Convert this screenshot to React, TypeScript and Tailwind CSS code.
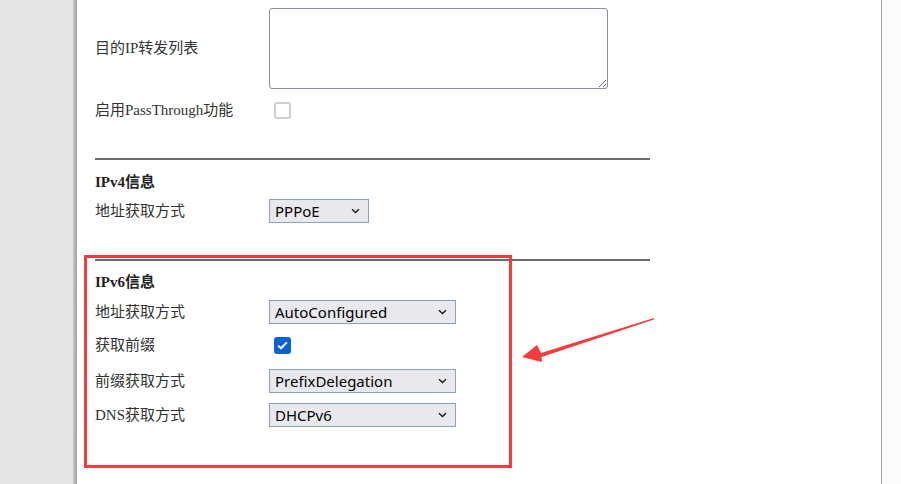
import type { FC, ReactNode } from "react";

const labelFont = { fontFamily: "'Liberation Serif', 'Noto Sans CJK SC', serif" };

const Chevron = () => (
  <svg width="9" height="6" viewBox="0 0 9 6" className="absolute right-[8px] top-1/2 -translate-y-1/2">
    <path d="M1 1.2 L4.5 4.6 L8 1.2" fill="none" stroke="#1a1a1a" strokeWidth="1.4" />
  </svg>
);

const Select: FC<{ value: string; width: string }> = ({ value, width }) => (
  <div
    className={`relative h-[24px] ${width} border border-[#8aa2bd] bg-[#e9e9ed] pl-[5px] flex items-center text-[15px] text-black`}
    style={{ fontFamily: "'Noto Sans', 'Open Sans', sans-serif" }}
  >
    <span className="leading-none">{value}</span>
    <Chevron />
  </div>
);

const Row: FC<{ label: string; className?: string; children: ReactNode }> = ({ label, className, children }) => (
  <div className={`flex items-center ${className ?? ""}`}>
    <div className="w-[174px] h-[17px] leading-[17px] text-[15px] text-[#333]" style={labelFont}>
      {label}
    </div>
    {children}
  </div>
);

const Checkbox: FC<{ checked?: boolean }> = ({ checked }) =>
  checked ? (
    <div className="ml-[5px] w-[17px] h-[17px] rounded-[3px] bg-[#0b62d6] flex items-center justify-center">
      <svg width="11" height="9" viewBox="0 0 11 9">
        <path d="M1.2 4.6 L4 7.3 L9.8 1.4" fill="none" stroke="#fff" strokeWidth="2" />
      </svg>
    </div>
  ) : (
    <div className="ml-[5px] w-[17px] h-[17px] rounded-[3px] border-2 border-[#cfcfd3] bg-white" />
  );

const Header: FC<{ text: string; className?: string }> = ({ text, className }) => (
  <div className={`h-[20px] leading-[20px] text-[15px] font-bold text-[#222] ${className ?? ""}`} style={labelFont}>
    {text}
  </div>
);

export default function App() {
  return (
    <div className="relative flex w-[901px] h-[484px] overflow-hidden bg-white">
      <div className="w-[73px] bg-[#e6e6e6]" />
      <div className="w-[4px] bg-gradient-to-r from-[#c8c8c8] to-[#a3a3a3]" />
      <div className="flex-1 bg-white border-r border-[#a0a0a0]">
        <div className="w-[573px] pl-[18px] pt-[8px]">
          <Row label="目的IP转发列表">
            <textarea className="block w-[339px] h-[81px] border border-[#8f8f9d] rounded-[3px] bg-white" />
          </Row>
          <Row label="启用PassThrough功能" className="mt-[13px]">
            <Checkbox />
          </Row>
          <div className="mt-[39px] h-[2px] bg-[#6b6b6b]" />
          <Header text="IPv4信息" className="mt-[12px]" />
          <Row label="地址获取方式" className="mt-[7px]">
            <Select value="PPPoE" width="w-[100px]" />
          </Row>
          <div className="mt-[36px] h-[2px] bg-[#6b6b6b]" />
          <Header text="IPv6信息" className="mt-[11px]" />
          <Row label="地址获取方式" className="mt-[8px]">
            <Select value="AutoConfigured" width="w-[187px]" />
          </Row>
          <Row label="获取前缀" className="mt-[13px]">
            <Checkbox checked />
          </Row>
          <Row label="前缀获取方式" className="mt-[15px]">
            <Select value="PrefixDelegation" width="w-[187px]" />
          </Row>
          <Row label="DNS获取方式" className="mt-[10px]">
            <Select value="DHCPv6" width="w-[187px]" />
          </Row>
        </div>
      </div>
      <div className="w-[19px] bg-[#fcfcfc]" />

      {/* annotation */}
      <div className="absolute left-[84px] top-[255px] w-[428px] h-[213px] border-[3px] border-[#f53b3b]" />
      <svg className="absolute left-0 top-0" width="901" height="484" viewBox="0 0 901 484">
        <polygon
          points="654,318 541,353 537,345 522,357 542,362 541.5,357 654,319.5"
          fill="#f53b3b"
        />
      </svg>
    </div>
  );
}
